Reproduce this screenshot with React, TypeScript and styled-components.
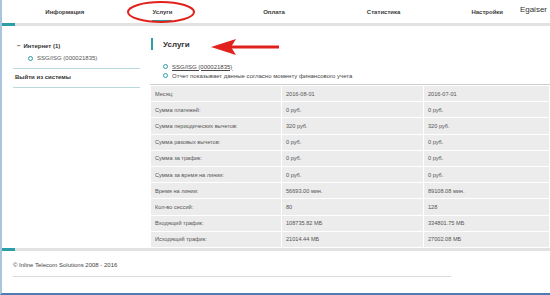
import React from "react";
import styled, { createGlobalStyle } from "styled-components";

const GlobalStyle = createGlobalStyle`
  html, body {
    margin: 0;
    padding: 0;
    background: #fff;
  }
  body {
    font-family: "Liberation Sans", Arial, sans-serif;
    color: #444;
  }
`;

const teal = "#2a9fa8";

const Page = styled.div`
  position: relative;
  box-sizing: border-box;
  width: 550px;
  height: 295px;
  border-left: 2px solid #a9c6de;
  border-bottom: 2px solid #4d7bb2;
  display: flex;
  flex-direction: column;
  overflow: hidden;
`;

const Header = styled.nav`
  display: flex;
  align-items: center;
  height: 23px;
  padding-left: 8px;
`;

const NavItem = styled.a<{ $w: number; $active?: boolean }>`
  position: relative;
  width: ${(p) => p.$w}px;
  text-align: center;
  font-size: 6px;
  font-weight: bold;
  color: #3a3a3a;
  text-decoration: none;
  line-height: 8px;

  &::after {
    content: "";
    display: ${(p) => (p.$active ? "block" : "none")};
    position: absolute;
    left: 50%;
    bottom: -6px;
    width: 20px;
    height: 2px;
    margin-left: -10px;
    background: ${teal};
  }
`;

const UserName = styled.div`
  position: absolute;
  top: 5px;
  right: 3px;
  font-size: 8px;
  color: #333;
`;

const Bar = styled.div`
  height: 3px;
  flex-shrink: 0;
  background: #e2e2e2;
  display: flex;

  &::before {
    content: "";
    width: 13px;
    background: ${teal};
  }
`;

const Body = styled.div`
  display: flex;
  height: 222px;
  flex-shrink: 0;
`;

const Sidebar = styled.aside`
  width: 127px;
  margin-left: 11px;
  padding-top: 14px;
`;

const TreeHeader = styled.div`
  display: flex;
  align-items: center;
  gap: 3px;
  height: 12px;
  padding-left: 4px;
  font-size: 6px;
  font-weight: bold;
  color: #333;
`;

const TreeLeaf = styled.div`
  display: flex;
  align-items: center;
  gap: 4px;
  height: 12px;
  padding-left: 15px;
  font-size: 6px;
  color: #555;
`;

const Ring = styled.span`
  width: 3px;
  height: 3px;
  border: 1px solid ${teal};
  border-radius: 50%;
  flex-shrink: 0;
`;

const SideDivider = styled.div`
  height: 1px;
  background: #b9d9da;
  margin-top: 4px;
`;

const SideLink = styled.div`
  height: 12px;
  display: flex;
  align-items: center;
  padding-left: 2px;
  margin-top: 2px;
  font-size: 6px;
  font-weight: bold;
  color: #333;
`;

const Main = styled.main`
  flex: 1;
  margin-left: 10px;
  padding-top: 12px;
`;

const Title = styled.h2`
  margin: 0;
  height: 12px;
  display: flex;
  align-items: center;
  padding-left: 10px;
  border-left: 2px solid ${teal};
  margin-left: 1px;
  font-size: 8px;
  font-weight: bold;
  color: #333;
`;

const Notes = styled.ul`
  list-style: none;
  margin: 12px 0 0;
  padding: 0 0 0 13px;
`;

const Note = styled.li`
  display: flex;
  align-items: center;
  gap: 4px;
  height: 9px;
  font-size: 6px;
  color: #444;
`;

const NoteLink = styled.a`
  color: #444;
  text-decoration: underline;
`;

const Table = styled.table`
  margin-top: 4px;
  width: 400px;
  border-collapse: separate;
  border-spacing: 1px;
  border-top: 1px solid #cfcfcf;
  table-layout: fixed;
`;

const Cell = styled.td<{ $w?: number }>`
  width: ${(p) => (p.$w ? `${p.$w}px` : "auto")};
  height: 15.2px;
  padding: 0 0 0 4px;
  background: #ececec;
  font-size: 5.6px;
  color: #555;
  white-space: nowrap;
`;

const Footer = styled.footer`
  padding: 11px 0 0 11px;
`;

const Copyright = styled.div`
  font-size: 6px;
  color: #444;
  height: 9px;
`;

const FooterLine = styled.div`
  width: 438px;
  height: 1px;
  margin-top: 5px;
  background: #dcdcdc;
`;

const Overlay = styled.svg`
  position: absolute;
  left: -2px;
  top: 0;
  pointer-events: none;
`;

const navItems = [
  { label: "Информация", w: 110 },
  { label: "Услуги", w: 86, active: true },
  { label: "Оплата", w: 138 },
  { label: "Статистика", w: 82 },
  { label: "Настройки", w: 126 },
];

const rows: [string, string, string][] = [
  ["Месяц:", "2016-08-01", "2016-07-01"],
  ["Сумма платежей:", "0 руб.", "0 руб."],
  ["Сумма периодических вычетов:", "320 руб.", "320 руб."],
  ["Сумма разовых вычетов:", "0 руб.", "0 руб."],
  ["Сумма за трафик:", "0 руб.", "0 руб."],
  ["Сумма за время на линии:", "0 руб.", "0 руб."],
  ["Время на линии:", "56693.00 мин.", "89108.08 мин."],
  ["Кол-во сессий:", "80", "128"],
  ["Входящий трафик:", "108735.82 МБ", "334801.75 МБ"],
  ["Исходящий трафик:", "21014.44 МБ", "27002.08 МБ"],
];

const App = () => (
  <>
    <GlobalStyle />
    <Page>
      <Header>
        {navItems.map((n) => (
          <NavItem key={n.label} $w={n.w} $active={n.active} href="#">
            {n.label}
          </NavItem>
        ))}
        <UserName>Egaiser</UserName>
      </Header>
      <Bar />
      <Body>
        <Sidebar>
          <TreeHeader>
            <span>−</span>Интернет (1)
          </TreeHeader>
          <TreeLeaf>
            <Ring />
            SSG/ISG (000021835)
          </TreeLeaf>
          <SideDivider />
          <SideLink>Выйти из системы</SideLink>
          <SideDivider />
        </Sidebar>
        <Main>
          <Title>Услуги</Title>
          <Notes>
            <Note>
              <Ring />
              <NoteLink href="#">SSG/ISG (000021835)</NoteLink>
            </Note>
            <Note>
              <Ring />
              Отчет показывает данные согласно моменту финансового учета
            </Note>
          </Notes>
          <Table>
            <tbody>
              {rows.map(([a, b, c], i) => (
                <tr key={a}>
                  <Cell $w={i === 0 ? 126 : undefined}>{a}</Cell>
                  <Cell $w={i === 0 ? 137 : undefined}>{b}</Cell>
                  <Cell>{c}</Cell>
                </tr>
              ))}
            </tbody>
          </Table>
        </Main>
      </Body>
      <Bar />
      <Footer>
        <Copyright>© Inline Telecom Solutions 2008 - 2016</Copyright>
        <FooterLine />
      </Footer>
      <Overlay width="550" height="295" viewBox="0 0 550 295">
        <ellipse cx="161" cy="12" rx="33" ry="10" fill="none" stroke="#e0211c" strokeWidth="2" />
        <line x1="230" y1="47" x2="279" y2="47" stroke="#e0211c" strokeWidth="3" />
        <polygon points="211,47 236,39 231,47 236,55" fill="#e0211c" />
      </Overlay>
    </Page>
  </>
);

export default App;
